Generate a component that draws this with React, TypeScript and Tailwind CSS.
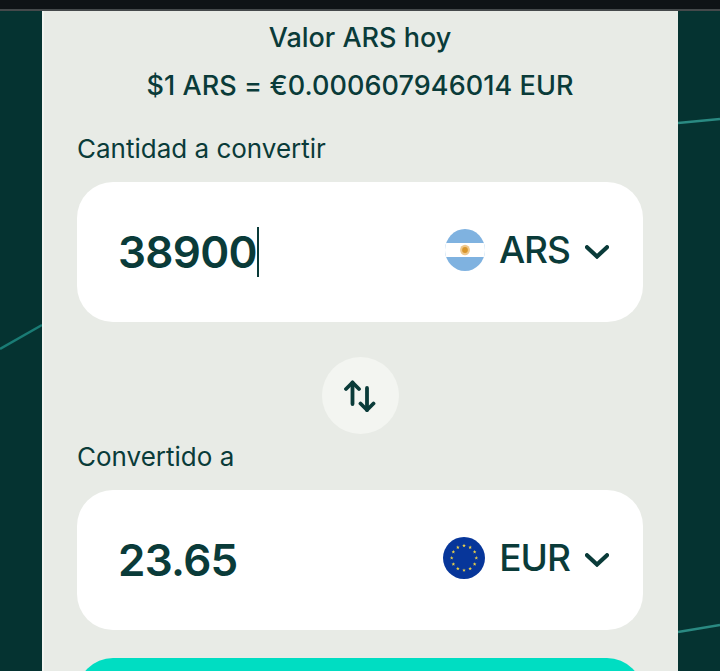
import React from 'react';

const dark = 'text-[#0a3b39]';

const ArgFlag = () => (
  <svg viewBox="0 0 42 42" preserveAspectRatio="none" className="h-[42px] w-[40px]">
    <defs>
      <clipPath id="ars-clip">
        <circle cx="21" cy="21" r="21" />
      </clipPath>
    </defs>
    <g clipPath="url(#ars-clip)">
      <rect width="42" height="42" fill="#7fb2e0" />
      <rect y="14" width="42" height="14" fill="#ffffff" />
      <circle cx="21" cy="21" r="5.2" fill="#efc88c" />
      <circle cx="21" cy="21" r="3" fill="#d8962c" />
    </g>
  </svg>
);

const EuFlag = () => {
  const stars = Array.from({ length: 12 }, (_, i) => {
    const a = (i * Math.PI) / 6;
    return { x: 21 + 12.3 * Math.sin(a), y: 21 - 12.3 * Math.cos(a) };
  });
  return (
    <svg viewBox="0 0 42 42" className="h-[42px] w-[42px]">
      <circle cx="21" cy="21" r="21" fill="#07369a" />
      {stars.map((s, i) => (
        <polygon
          key={i}
          transform={`translate(${s.x} ${s.y})`}
          points="0,-1.9 0.55,-0.6 1.8,-0.6 0.8,0.25 1.15,1.55 0,0.8 -1.15,1.55 -0.8,0.25 -1.8,-0.6 -0.55,-0.6"
          fill="#e8cf4a"
        />
      ))}
    </svg>
  );
};

const AmountRow: React.FC<{
  value: string;
  code: string;
  flag: React.ReactNode;
  caret?: boolean;
}> = ({ value, code, flag, caret }) => (
  <div className="flex h-[140px] items-center justify-between rounded-[36px] bg-white pl-[41px] pr-[34px]">
    <div className={`flex items-center text-[44px] font-semibold tracking-[-0.7px] ${dark}`}>
      <span>{value}</span>
      {caret && <span className="h-[50px] w-[2px] bg-[#0a3b39]" />}
    </div>
    <div className="-mt-[4px] flex items-center">
      {flag}
      <span className={`ml-[14px] text-[37px] font-medium tracking-[-1px] ${dark}`}>{code}</span>
      <svg viewBox="0 0 24 14" className={`ml-[15px] mt-[4px] h-[14px] w-[24px] ${dark}`} fill="none" stroke="currentColor" strokeWidth="4.2" strokeLinecap="round">
        <path d="M2 2.2 12 11.5 22 2.2" />
      </svg>
    </div>
  </div>
);

export default function App() {
  return (
    <div
      className="relative flex h-[671px] w-[720px] flex-col overflow-hidden bg-[#053331]"
      style={{ fontFamily: 'Inter, "Liberation Sans", sans-serif' }}
    >
      {/* background streaks */}
      <svg className="absolute inset-0 h-full w-full" viewBox="0 0 720 671">
        <line x1="0" y1="349" x2="42" y2="325" stroke="#1a7c75" strokeWidth="2.5" />
        <line x1="678" y1="123" x2="720" y2="119" stroke="#2a8a82" strokeWidth="2.5" />
        <line x1="678" y1="632" x2="720" y2="625" stroke="#2a8a82" strokeWidth="2.5" />
      </svg>

      <div className="relative h-[9px] shrink-0 bg-[#0f1316]" />
      <div className="relative h-[2px] shrink-0 bg-[#45494b]" />

      <div className="relative flex flex-1 justify-center">
        <div className="h-[700px] w-[636px] border-l-2 border-[#f2f4f0] bg-[#e8ebe6] pl-[33px] pr-[35px]">
          <p className={`mt-[11px] text-center text-[27px] leading-[32px] font-medium ${dark}`}>Valor ARS hoy</p>
          <p className={`mt-[16px] text-center text-[27px] leading-[32px] font-medium tracking-[0.07px] ${dark}`}>
            $1 ARS = €0.000607946014 EUR
          </p>

          <p className={`mt-[31px] text-[26px] leading-[32px] ${dark}`}>Cantidad a convertir</p>
          <div className="mt-[17px]">
            <AmountRow value="38900" code="ARS" flag={<ArgFlag />} caret />
          </div>

          <div className="mt-[35px] flex justify-center">
            <div className="flex h-[77px] w-[77px] items-center justify-center rounded-full bg-[#f3f5f1]">
              <svg viewBox="0 0 32 32" className={`h-[32px] w-[32px] ${dark}`} fill="none" stroke="currentColor" strokeWidth="3.8" strokeLinecap="round" strokeLinejoin="round">
                <path d="M8.5 24V2.5" />
                <path d="M2 9 8.5 2.5 15 9" />
                <path d="M23 8v22" />
                <path d="M16.5 23.5 23 30l6.5-6.5" />
              </svg>
            </div>
          </div>

          <p className={`mt-[7px] text-[26px] leading-[32px] ${dark}`}>Convertido a</p>
          <div className="mt-[17px]">
            <AmountRow value="23.65" code="EUR" flag={<EuFlag />} />
          </div>

          <div className="mt-[28px] h-[72px] rounded-[36px] bg-[#00ddc2]" />
        </div>
      </div>
    </div>
  );
}
